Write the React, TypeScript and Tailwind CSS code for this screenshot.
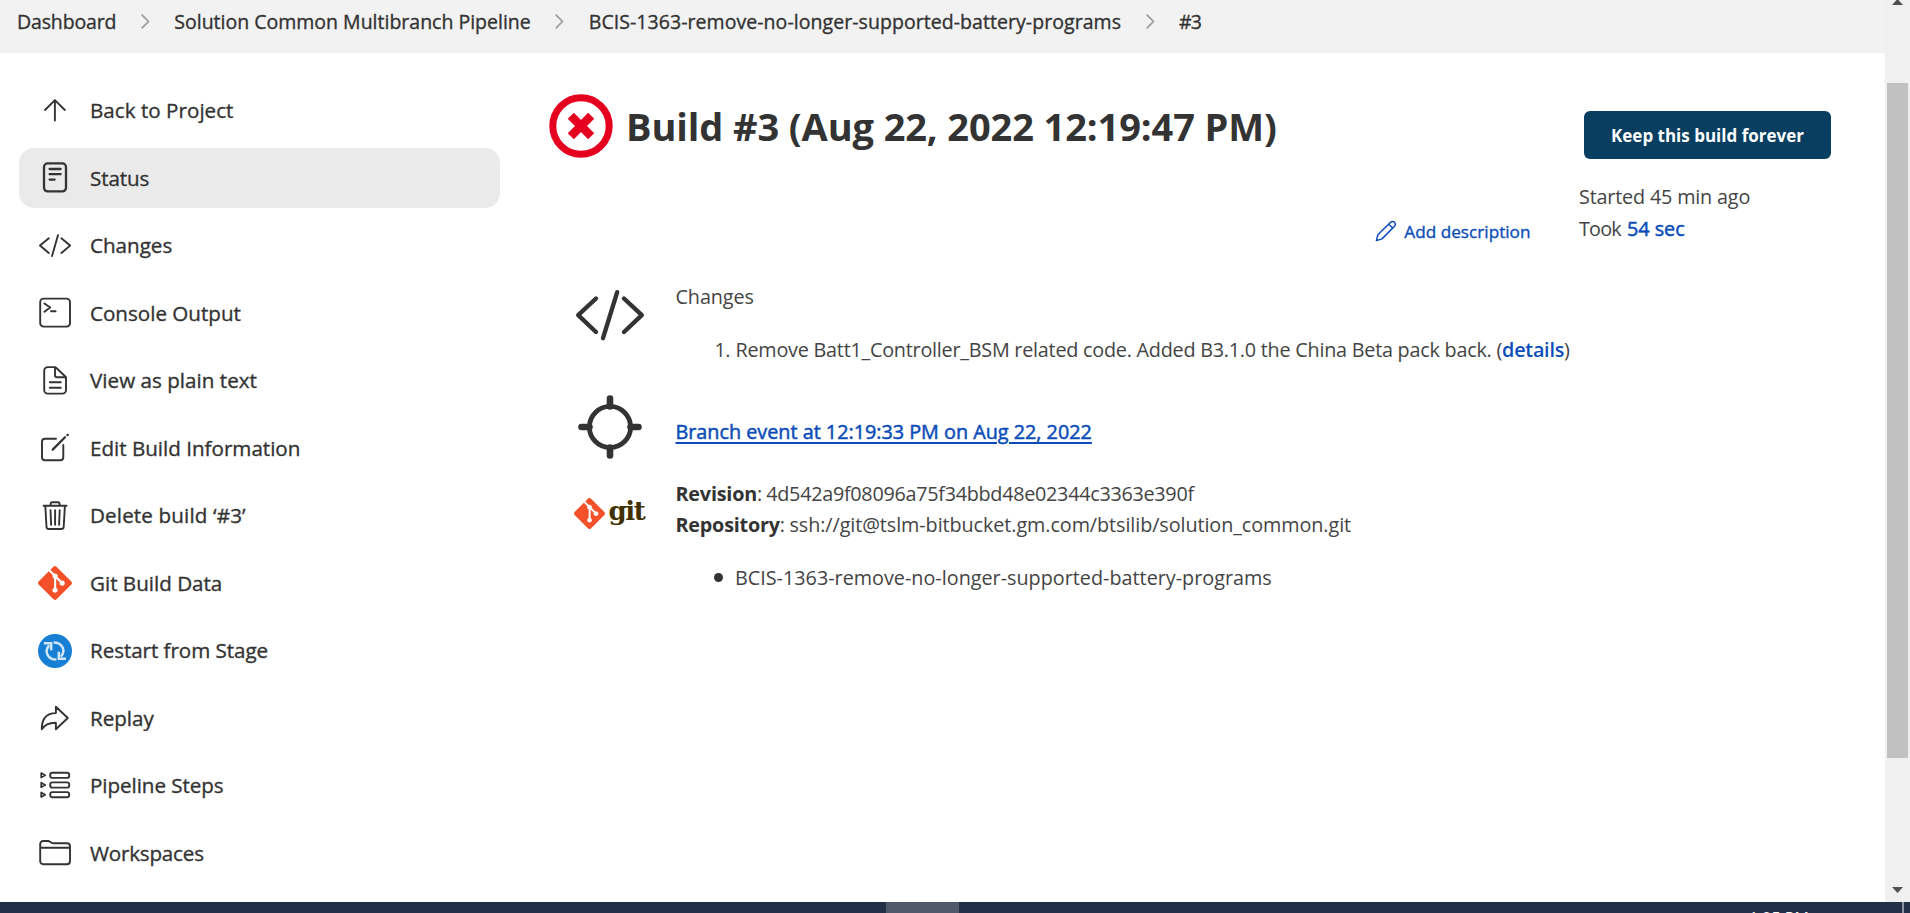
import type { ReactNode } from "react";
import { SiGit } from "react-icons/si";

function Icon({ children, width = 1.9 }: { children: ReactNode; width?: number }) {
  return (
    <svg viewBox="0 0 34 34" className="size-[34px]" fill="none" stroke="#333333" strokeWidth={width} strokeLinecap="round" strokeLinejoin="round">
      {children}
    </svg>
  );
}

const tasks: { label: string; tracking: string; icon: ReactNode; active?: boolean }[] = [
  {
    label: "Back to Project",
    tracking: "tracking-[0.03px]",
    icon: <Icon><path d="M16.9 26.6V6.4M7 16l9.9-9.9 9.9 9.9" /></Icon>,
  },
  {
    label: "Status",
    tracking: "tracking-[-0.1px]",
    active: true,
    icon: (
      <Icon width={2.3}>
        <rect x="6" y="2.4" width="22" height="28" rx="3.6" />
        <path d="M11.6 8h11M11.6 13.2h11M11.6 18.600h5" />
      </Icon>
    ),
  },
  {
    label: "Changes",
    tracking: "tracking-normal",
    icon: <Icon><path d="M10.8 9.3L2 16.6l8.8 7.4M23.4 9.3l8.7 7.3-8.7 7.4M20 6.2L14 27" /></Icon>,
  },
  {
    label: "Console Output",
    tracking: "tracking-normal",
    icon: (
      <Icon>
        <rect x="2.2" y="2.6" width="29.8" height="28" rx="3.4" />
        <path d="M6.4 7.4l5.8 4.2-5.8 4.2M13 15.3h4.6" />
      </Icon>
    ),
  },
  {
    label: "View as plain text",
    tracking: "tracking-[0.03px]",
    icon: (
      <Icon>
        <path d="M28 14.2V26a3.6 3.6 0 0 1-3.6 3.6H9.8A3.6 3.6 0 0 1 6.2 26V6.7a3.6 3.6 0 0 1 3.6-3.6h6.6a2.4 2.4 0 0 1 1.7.7l9.2 8.7a2.4 2.4 0 0 1 .7 1.7z" />
        <path d="M17 3.4v7.9a1.9 1.9 0 0 0 1.9 1.9h8.7M11.8 18.3h11M11.8 23.8h11" />
      </Icon>
    ),
  },
  {
    label: "Edit Build Information",
    tracking: "tracking-normal",
    icon: (
      <Icon>
        <path d="M18 7.8H7a3 3 0 0 0-3 3v15.5a3 3 0 0 0 3 3h15.3a3 3 0 0 0 3-3V14" />
        <path d="M14.7 18.6L27 6.3M29.4 4.1l.3-.3" strokeWidth="2.3" />
      </Icon>
    ),
  },
  {
    label: "Delete build ‘#3’",
    tracking: "tracking-[0.15px]",
    icon: (
      <Icon>
        <path d="M5.6 6.7h23M7.3 6.9l1.2 20.8a2.4 2.4 0 0 0 2.4 2.3h12.4a2.4 2.4 0 0 0 2.4-2.3l1.2-20.8M12.6 6.5V4.9a1.7 1.7 0 0 1 1.7-1.7h5.6a1.7 1.7 0 0 1 1.7 1.7v1.6M17.1 11.2v14.6M12.5 11.2l.6 14.6M21.7 11.2l-.6 14.6" />
      </Icon>
    ),
  },
  { label: "Git Build Data", tracking: "tracking-normal", icon: <SiGit className="size-[34px] text-[#f4502a]" /> },
  {
    label: "Restart from Stage",
    tracking: "tracking-[-0.05px]",
    icon: (
      <svg viewBox="0 0 34 34" className="size-[34px]" fill="none" stroke="#cfe6f8" strokeWidth="2.5">
        <circle cx="17" cy="17" r="17" fill="#1880d4" stroke="none" />
        <path d="M11.2 11.4C5.8 17.400 9.600 25.600 18.400 25.600" />
        <path d="M15.600 8.600c9.200 0 12.400 8.600 7.200 14" />
        <path d="M5.800 9.200h7.400v7" />
        <path d="M20.800 17.800v7h7.200" />
      </svg>
    ),
  },
  {
    label: "Replay",
    tracking: "tracking-normal",
    icon: (
      <Icon>
        <path d="M29.8 17L17.9 5.7v6.4C6.5 12.1 3.8 20.2 3.8 28.2c3.3-4.2 6.2-6.4 14.1-6.400v6.400z" />
      </Icon>
    ),
  },
  {
    label: "Pipeline Steps",
    tracking: "tracking-[-0.05px]",
    icon: (
      <Icon>
        <path d="M3.2 4l4 2.3-4 2.3zM3.2 13.7l4 2.3-4 2.3zM3.2 23.4l4 2.3-4 2.3z" strokeWidth="1.7" />
        <rect x="12.2" y="3.7" width="19" height="5.2" rx="2.2" />
        <rect x="12.2" y="13.4" width="19" height="5.2" rx="2.2" />
        <rect x="12.2" y="23.1" width="19" height="5.2" rx="2.2" />
      </Icon>
    ),
  },
  {
    label: "Workspaces",
    tracking: "tracking-[-0.2px]",
    icon: (
      <Icon>
        <path d="M2.2 11.8V8a3 3 0 0 1 3-3h4.6c1 0 1.5.2 2.3.8l1.2.8c.7.5 1.3.7 2.2.7H29a3 3 0 0 1 3 3v14.900a3 3 0 0 1-3 3H5.200a3 3 0 0 1-3-3V11.800zM2.200 11.800H32" />
      </Icon>
    ),
  },
];

function Chevron() {
  return (
    <svg viewBox="0 0 9 15" className="mx-[24.5px] h-[15px] w-[9px] shrink-0" fill="none" stroke="#9b9b9b" strokeWidth="1.7" strokeLinecap="round" strokeLinejoin="round">
      <path d="M1.2 1.2l6.3 6.3-6.3 6.3" />
    </svg>
  );
}

function Breadcrumbs() {
  return (
    <nav className="h-[53px] bg-[#f2f2f2] pl-[17px] text-[19.5px] text-[#333] [-webkit-text-stroke:0.35px_#333]">
      <div className="flex h-[43px] items-center">
        <span className="tracking-[-0.15px]">Dashboard</span>
        <Chevron />
        <span>Solution Common Multibranch Pipeline</span>
        <Chevron />
        <span className="tracking-[0.06px]">BCIS-1363-remove-no-longer-supported-battery-programs</span>
        <Chevron />
        <span className="tracking-[-1px]">#3</span>
      </div>
    </nav>
  );
}

function Sidebar() {
  return (
    <aside className="flex w-[530px] shrink-0 flex-col gap-[7.5px] pt-[27.5px] pl-[19px]">
      {tasks.map((t) => (
        <a
          key={t.label}
          className={`flex h-[60px] w-[481px] shrink-0 items-center gap-[18px] rounded-[15px] pl-[19px] text-[20.6px] text-[#333] [-webkit-text-stroke:0.35px_#333] ${t.active ? "bg-[#eaeaea]" : ""}`}
        >
          {t.icon}
          <span className={t.tracking}>{t.label}</span>
        </a>
      ))}
    </aside>
  );
}

function Summary() {
  return (
    <div className="mt-[37px] grid grid-cols-[126.5px_1fr] whitespace-nowrap text-[19.8px] leading-8 text-[#444]">
      <div className="h-[115px] pt-[3px] pl-[25px]">
        <svg viewBox="0 0 72 64" className="h-16 w-[72px]" fill="none" stroke="#333" strokeWidth="4.4" strokeLinecap="round" strokeLinejoin="round">
          <path d="M22 15.5L4.2 32.2 22 49M50 15.5l17.8 16.7L50 49M43.2 9.2L29 55.2" />
        </svg>
      </div>
      <div className="pt-px">
        <div className="tracking-[-0.1px]">Changes</div>
        <ol className="mt-[21px] flex pl-[39px]">
          <li className="flex">
            <span className="w-[21px] tracking-[-0.5px]">1.</span>
            <span className="tracking-[-0.235px]">
              Remove Batt1_Controller_BSM related code. Added B3.1.0 the China Beta pack back. (
              <a className="font-semibold text-[#0b4db8]">details</a>)
            </span>
          </li>
        </ol>
      </div>

      <div className="h-[82.5px] pl-[29px]">
        <svg viewBox="0 0 64 64" className="size-16" fill="none" stroke="#333" strokeWidth="4.8">
          <circle cx="32" cy="32" r="20.6" />
          <path d="M32 3.5v8M32 52.5v8M3.5 32h8M52.5 32h8" strokeWidth="6.6" strokeLinecap="round" />
        </svg>
      </div>
      <div className="pt-[21px]">
        <a className="text-[#0b4db8] underline decoration-[1.5px] underline-offset-[3px] [-webkit-text-stroke:0.5px_#0b4db8]">
          Branch event at 12:19:33 PM on Aug 22, 2022
        </a>
      </div>

      <div className="flex h-[70px] items-start pt-[20px] pl-[24.5px]">
        <SiGit className="size-[31px] text-[#f4502a]" />
        <span className="-mt-[3px] ml-[4px] font-['DejaVu_Serif',serif] text-[26px] font-bold tracking-[-1.4px] text-[#413000]">git</span>
      </div>
      <div className="leading-[31px]">
        <div className="flex">
          <b className="tracking-[-0.2px] text-[#333]">Revision</b>
          <span className="mr-[4px]">:</span>
          <span className="tracking-[-0.28px]">4d542a9f08096a75f34bbd48e02344c3363e390f</span>
        </div>
        <div className="flex">
          <b className="tracking-[-0.22px] text-[#333]">Repository</b>
          <span className="mr-[4.5px]">:</span>
          <span className="tracking-[-0.08px]">ssh://git@tslm-bitbucket.gm.com/btsilib/solution_common.git</span>
        </div>
        <ul className="mt-[22px] pl-[38px]">
          <li className="flex items-center gap-[12.5px]">
            <span className="size-[9px] rounded-full bg-[#333]" />
            <span>BCIS-1363-remove-no-longer-supported-battery-programs</span>
          </li>
        </ul>
      </div>
    </div>
  );
}

function BuildPage() {
  return (
    <main className="flex pt-[41px]">
      <section className="w-[1030px] shrink-0">
        <div className="flex h-16 items-center">
          <svg viewBox="0 0 64 64" className="size-16" fill="none" stroke="#e6001f">
            <circle cx="32" cy="32" r="28.2" strokeWidth="7" />
            <path d="M21.8 21.8l20.4 20.4M42.2 21.8L21.800 42.200" strokeWidth="8.600" />
          </svg>
          <h1 className="ml-[13px] text-[38px] font-bold whitespace-nowrap tracking-[-0.11px] text-[#333]">Build #3 (Aug 22, 2022 12:19:47 PM)</h1>
        </div>
        <div className="mt-[61px] flex h-6 items-center justify-end gap-[7px] pr-[48.5px] text-[17.2px] text-[#0b4db8] [-webkit-text-stroke:0.35px_#0b4db8]">
          <svg viewBox="0 0 22 22" className="size-[22px]" fill="none" stroke="#0b4db8" strokeWidth="1.5" strokeLinejoin="round">
            <path d="M1.400 20.600l1.500-5.800L15.600 2.300a2.700 2.700 0 0 1 3.900 0 2.700 2.700 0 0 1 0 3.900L7 18.900zM13.800 4.200l4 4" />
          </svg>
          <span className="pt-px">Add description</span>
        </div>
        <Summary />
      </section>
      <section className="pt-[17px]">
        <button className="ml-[5px] flex h-12 w-[247px] items-center justify-center rounded-[6px] bg-[#083e60] text-[17px] font-bold text-white">
          <span className="pt-[2px]">Keep this build forever</span>
        </button>
        <div className="mt-[22px] text-[19.8px] leading-[31.5px] whitespace-nowrap text-[#444]">
          <div className="tracking-[-0.18px]">Started 45 min ago</div>
          <div className="flex gap-[6px]">
            <span className="tracking-[-0.8px]">Took</span>
            <a className="text-[#0b4db8] [-webkit-text-stroke:0.5px_#0b4db8]">54 sec</a>
          </div>
        </div>
      </section>
    </main>
  );
}

function Scrollbar() {
  return (
    <div className="flex h-full w-[25px] shrink-0 flex-col items-center bg-[#f0f0f0]">
      <svg viewBox="0 0 11 5" className="h-[5px] w-[11px]" fill="#505050"><path d="M4.5 0h2L11 5H0z" /></svg>
      <div className="mt-[78px] h-[675px] w-[21px] bg-[#c1c1c1]" />
      <svg viewBox="0 0 11 6" className="mt-auto mb-[9px] h-[6px] w-[11px]" fill="#505050"><path d="M0 0h11L5.5 6z" /></svg>
    </div>
  );
}

export default function App() {
  return (
    <div className="flex h-[913px] w-[1910px] flex-col overflow-hidden bg-white font-['Open_Sans','Noto_Sans',sans-serif]">
      <div className="flex h-[902px] shrink-0">
        <div className="flex min-w-0 flex-1 flex-col overflow-hidden">
          <Breadcrumbs />
          <div className="flex">
            <div className="w-[549px] shrink-0"><Sidebar /></div>
            <BuildPage />
          </div>
        </div>
        <Scrollbar />
      </div>
      <footer className="flex h-[11px] overflow-hidden bg-[#232f47]">
        <div className="ml-[886px] h-full w-[73px] bg-[#50596b]" />
        <span className="mt-[6px] ml-[790px] text-[16px] leading-5 whitespace-nowrap text-white">1:25 PM</span>
        <div className="mr-[6px] ml-auto h-full w-[2px] bg-[#8d94a1]" />
      </footer>
    </div>
  );
}
